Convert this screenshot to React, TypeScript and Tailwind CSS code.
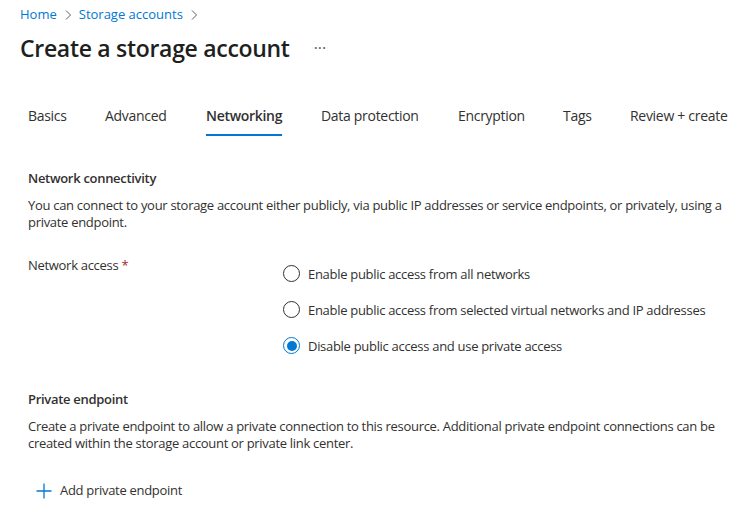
import { useState } from 'react';

const tabs = [
  { label: 'Basics', w: 'w-[77px]' },
  { label: 'Advanced', w: 'w-[101px]' },
  { label: 'Networking', w: 'w-[115px]' },
  { label: 'Data protection', w: 'w-[137px]' },
  { label: 'Encryption', w: 'w-[105px]' },
  { label: 'Tags', w: 'w-[67px]' },
  { label: 'Review + create', w: 'w-auto' },
];

const options = [
  'Enable public access from all networks',
  'Enable public access from selected virtual networks and IP addresses',
  'Disable public access and use private access',
];

function Chevron() {
  return (
    <svg width="8" height="12" viewBox="0 0 8 12" className="mx-[7px]">
      <path d="M2 1.5 L6.5 6 L2 10.5" fill="none" stroke="#605e5c" strokeWidth="1" />
    </svg>
  );
}

function Radio({ checked }: { checked: boolean }) {
  return (
    <span
      className={`w-[17px] h-[17px] rounded-full border flex items-center justify-center shrink-0 ${
        checked ? 'border-[#0078d4]' : 'border-[#323130]'
      }`}
    >
      {checked && <span className="w-[10px] h-[10px] rounded-full bg-[#0078d4]" />}
    </span>
  );
}

export default function App() {
  const [active, setActive] = useState(2);
  const [access, setAccess] = useState(2);

  return (
    <div className="w-[754px] h-[523px] bg-white text-[#323130] overflow-hidden" style={{ fontFamily: '"Segoe UI", "Open Sans", sans-serif' }}>
      {/* Breadcrumb */}
      <div className="flex items-center pl-[20px] pt-[7px] h-[22px] text-[13px] text-[#0078d4]">
        <span>Home</span>
        <Chevron />
        <span>Storage accounts</span>
        <Chevron />
      </div>

      {/* Title */}
      <div className="flex items-center pl-[20px] mt-[9px] h-[34px]">
        <h1 className="text-[23px] font-semibold tracking-[-0.3px] text-[#201f1e]">Create a storage account</h1>
        <span className="ml-[24px] text-[#605e5c] text-[16px] leading-none -mt-[1px]">···</span>
      </div>

      {/* Tabs */}
      <div className="flex pl-[28px] mt-[39px] h-[36px] text-[14px] tracking-[-0.3px]">
        {tabs.map((t, i) => (
          <div key={t.label} className={`${t.w} shrink-0`}>
            <button
              onClick={() => setActive(i)}
              className={`relative h-[32px] flex items-start ${i === active ? 'font-semibold' : ''}`}
            >
              <span className="pt-[1px]">{t.label}</span>
              {i === active && <span className="absolute left-0 right-0 bottom-0 h-[2px] bg-[#0078d4]" />}
            </button>
          </div>
        ))}
      </div>

      {/* Network connectivity */}
      <div className="pl-[28px] pr-[20px] text-[13px] tracking-[-0.3px]">
        <h2 className="mt-[29px] font-semibold leading-[18px]">Network connectivity</h2>
        <p className="mt-[10px] leading-[17px]">
          You can connect to your storage account either publicly, via public IP addresses or service endpoints, or privately, using a private endpoint.
        </p>

        <div className="flex mt-[25px]">
          <div className="w-[255px] leading-[18px]">
            Network access <span className="text-[#a4262c]">*</span>
          </div>
          <div className="flex flex-col gap-[17px] mt-[8px]">
            {options.map((o, i) => (
              <label key={o} className="flex items-center gap-[8px] h-[19px] cursor-pointer" onClick={() => setAccess(i)}>
                <Radio checked={access === i} />
                <span className="leading-[18px]">{o}</span>
              </label>
            ))}
          </div>
        </div>

        {/* Private endpoint */}
        <h2 className="mt-[35px] font-semibold leading-[18px]">Private endpoint</h2>
        <p className="mt-[10px] leading-[17px]">
          Create a private endpoint to allow a private connection to this resource. Additional private endpoint connections can be created within the storage account or private link center.
        </p>

        <button className="flex items-center mt-[29px] ml-[8px] gap-[8px]">
          <svg width="16" height="16" viewBox="0 0 16 16">
            <path d="M8 0.5 V15.5 M0.5 8 H15.5" stroke="#0078d4" strokeWidth="1.3" />
          </svg>
          <span className="text-[13px] text-[#323130]">Add private endpoint</span>
        </button>
      </div>
    </div>
  );
}
